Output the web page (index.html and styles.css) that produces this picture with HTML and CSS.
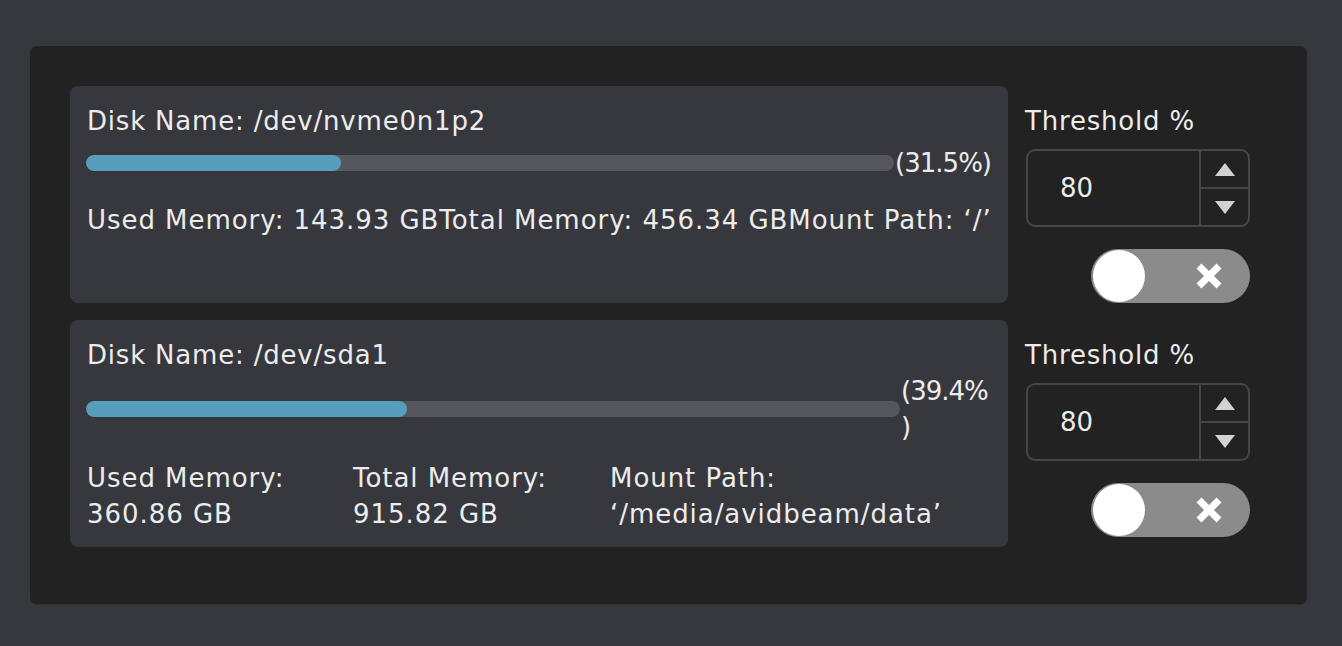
FILE: index.html
```html
<!DOCTYPE html>
<html>
<head>
<meta charset="utf-8">
<link rel="stylesheet" href="styles.css">
</head>
<body>
<div class="panel">
  <div class="row">
    <div class="card">
      <div class="title">Disk Name: /dev/nvme0n1p2</div>
      <div class="bar-row">
        <div class="bar"><div class="fill" style="width:31.5%"></div></div>
        <div class="pct">(31.5%)</div>
      </div>
      <div class="stats">
        <span>Used Memory: 143.93 GB</span><span>Total Memory: 456.34 GB</span><span>Mount Path: ‘/’</span>
      </div>
    </div>
    <div class="side">
      <div class="label">Threshold %</div>
      <div class="spin">
        <div class="value">80</div>
        <div class="arrows">
          <div class="arrow"><svg width="20" height="13" viewBox="0 0 20 13"><path d="M10 0 L20 13 L0 13 Z" fill="#d2d2d2"/></svg></div>
          <div class="arrow"><svg width="20" height="13" viewBox="0 0 20 13"><path d="M0 0 L20 0 L10 13 Z" fill="#d2d2d2"/></svg></div>
        </div>
      </div>
      <div class="toggle">
        <div class="knob"></div>
        <svg class="x" width="28" height="26" viewBox="0 0 28 26"><path d="M4 3 L24 23 M24 3 L4 23" stroke="#fff" stroke-width="7" stroke-linecap="butt"/></svg>
      </div>
    </div>
  </div>
  <div class="row">
    <div class="card">
      <div class="title">Disk Name: /dev/sda1</div>
      <div class="bar-row">
        <div class="bar"><div class="fill" style="width:39.4%"></div></div>
        <div class="pct wide">(39.4%<br>)</div>
      </div>
      <div class="stats cols">
        <span>Used Memory: 360.86 GB</span><span>Total Memory: 915.82 GB</span><span>Mount Path: ‘/media/avidbeam/data’</span>
      </div>
    </div>
    <div class="side">
      <div class="label">Threshold %</div>
      <div class="spin">
        <div class="value">80</div>
        <div class="arrows">
          <div class="arrow"><svg width="20" height="13" viewBox="0 0 20 13"><path d="M10 0 L20 13 L0 13 Z" fill="#d2d2d2"/></svg></div>
          <div class="arrow"><svg width="20" height="13" viewBox="0 0 20 13"><path d="M0 0 L20 0 L10 13 Z" fill="#d2d2d2"/></svg></div>
        </div>
      </div>
      <div class="toggle">
        <div class="knob"></div>
        <svg class="x" width="28" height="26" viewBox="0 0 28 26"><path d="M4 3 L24 23 M24 3 L4 23" stroke="#fff" stroke-width="7" stroke-linecap="butt"/></svg>
      </div>
    </div>
  </div>
</div>
</body>
</html>
```
FILE: styles.css
```css
html, body {
  margin: 0;
  padding: 0;
  background: #37383e;
}
body {
  padding: 46px 35px 42px 30px;
  font-family: "DejaVu Sans", sans-serif;
  font-size: 26px;
  letter-spacing: 0.8px;
  line-height: 36px;
  color: #ececec;
}
.panel {
  background: #222222;
  border-radius: 7px;
  padding: 40px 57px 57px 40px;
  display: flex;
  flex-direction: column;
  gap: 17px;
  border-bottom: 1px solid #2e2f33;
}
.row {
  display: flex;
  gap: 17px;
}
.card {
  width: 938px;
  box-sizing: border-box;
  background: #37383e;
  border-radius: 8px;
  padding: 17px 17px 15px 17px;
}
.title {
  white-space: nowrap;
}
.bar-row {
  display: flex;
  align-items: center;
  min-height: 48px;
}
.bar {
  flex: 1;
  height: 16px;
  border-radius: 8px;
  background: #56575c;
  margin-left: -1px;
  margin-right: 1px;
  overflow: hidden;
}
.fill {
  height: 100%;
  background: #579ebd;
  border-radius: 8px;
}
.pct {
  white-space: nowrap;
  letter-spacing: -1px;
}
.pct.wide {
  width: 90px;
}
.stats {
  margin-top: 15px;
  display: flex;
  white-space: nowrap;
  letter-spacing: 0.95px;
}
.stats.cols {
  display: grid;
  grid-template-columns: 266px 257px 1fr;
  white-space: normal;
}
.stats.cols span {
  padding-right: 20px;
}
.side {
  width: 225px;
  display: flex;
  flex-direction: column;
}
.label {
  margin-top: 17px;
  white-space: nowrap;
}
.spin {
  margin-top: 10px;
  height: 78px;
  margin-left: 1px;
  box-sizing: border-box;
  border: 2px solid #464646;
  border-radius: 9px;
  display: flex;
}
.value {
  flex: 1;
  display: flex;
  align-items: center;
  padding-left: 32px;
  letter-spacing: 0;
}
.arrows {
  width: 47px;
  border-left: 2px solid #464646;
  display: flex;
  flex-direction: column;
}
.arrow {
  flex: 1;
  display: flex;
  align-items: center;
  justify-content: center;
}
.arrow + .arrow {
  border-top: 2px solid #464646;
}
.toggle {
  margin-top: 22px;
  align-self: flex-end;
  width: 159px;
  height: 54px;
  border-radius: 27px;
  background: #8b8b8b;
  display: flex;
  align-items: center;
  justify-content: space-between;
  padding: 0 27px 0 2px;
  box-sizing: border-box;
}
.knob {
  width: 52px;
  height: 52px;
  border-radius: 50%;
  background: #ffffff;
}
.x {
  display: block;
}
```
